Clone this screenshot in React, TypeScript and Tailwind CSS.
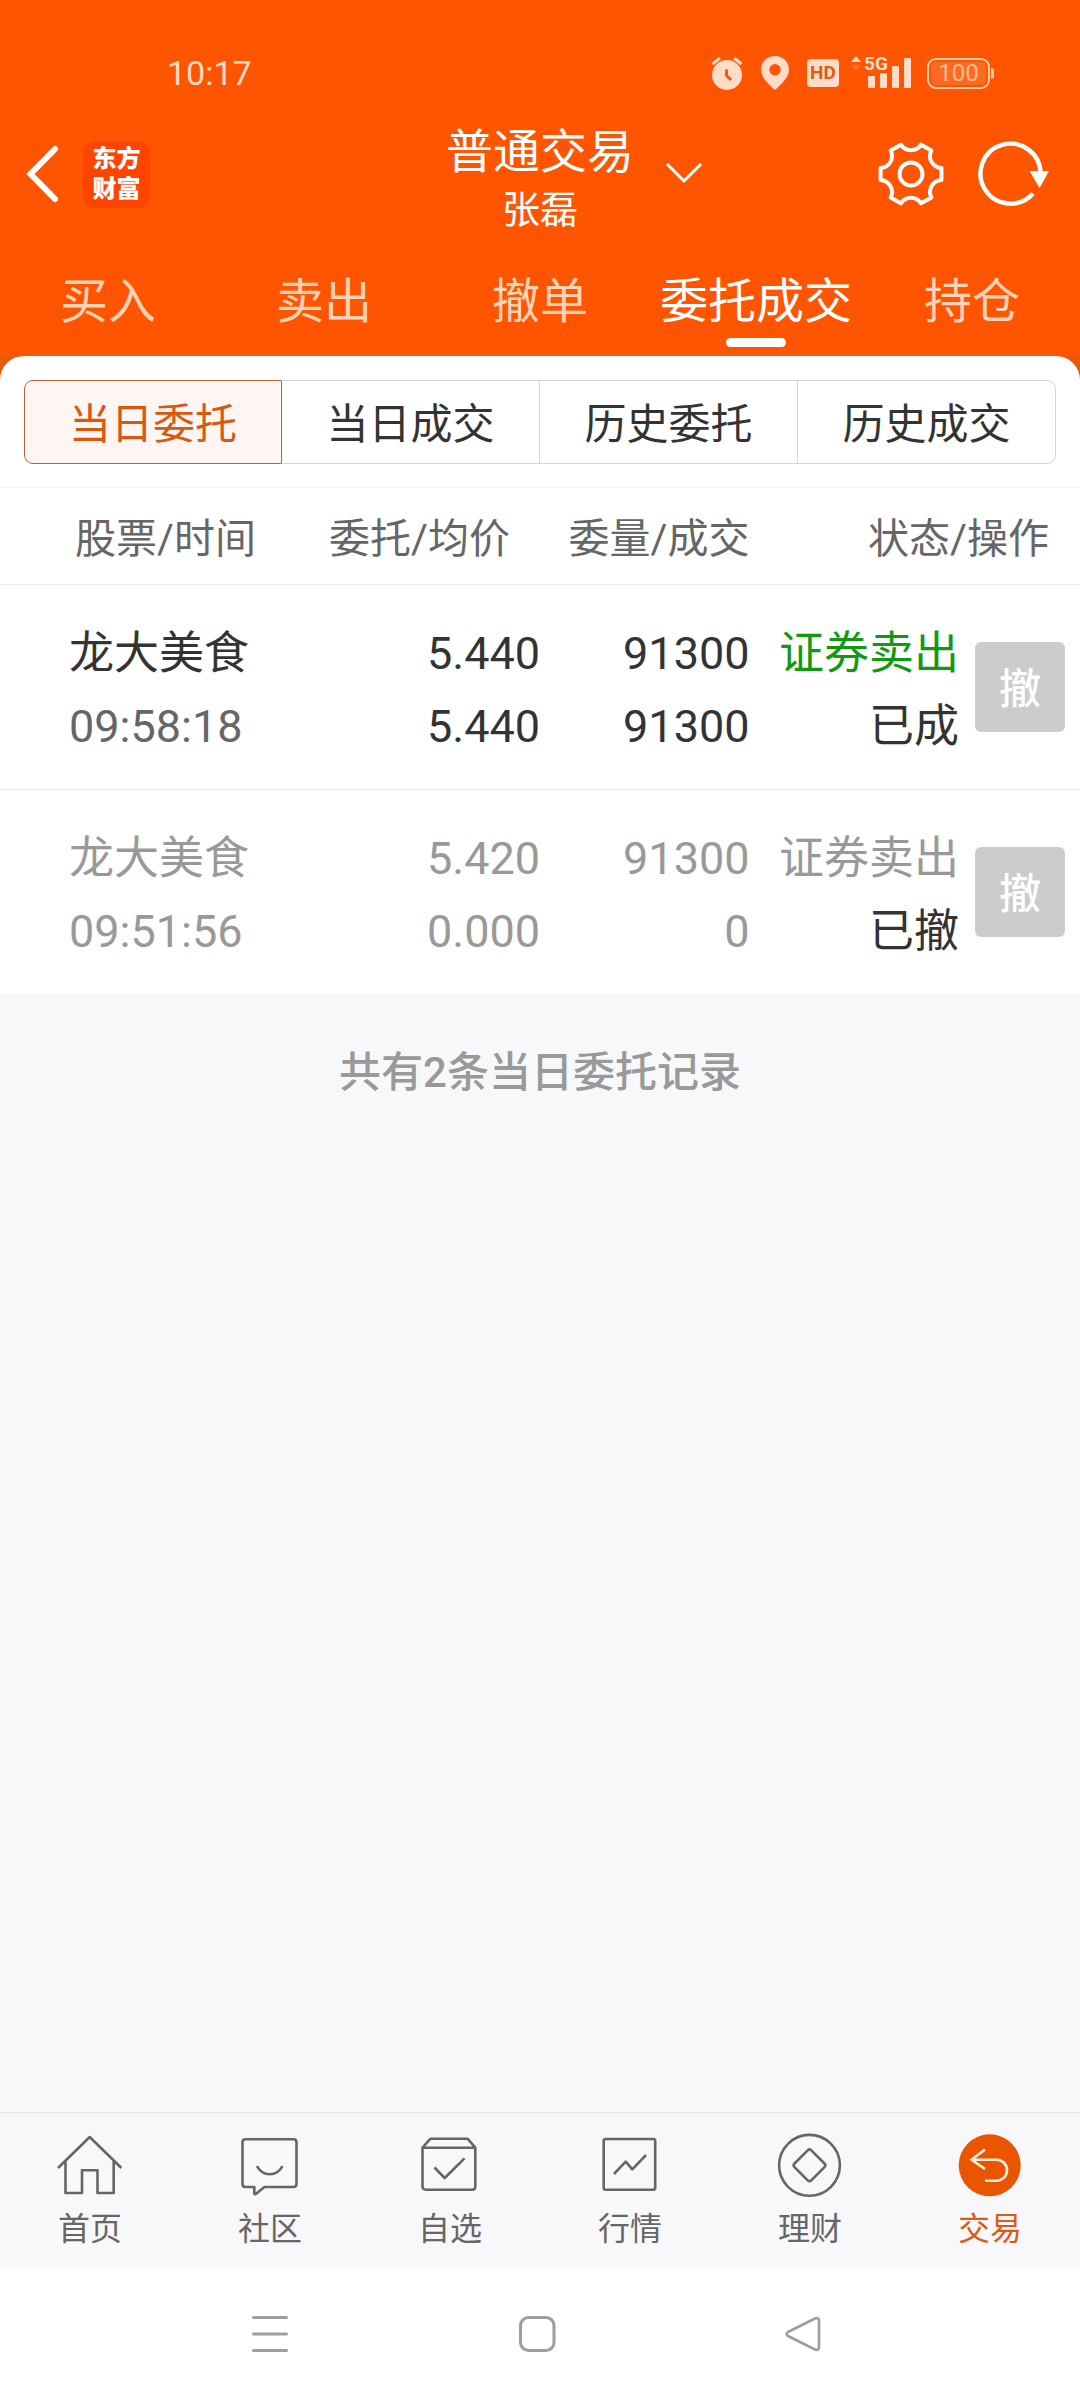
import type { ReactNode } from "react";

const mainTabs = ["买入", "卖出", "撤单", "委托成交", "持仓"];
const activeTab = "委托成交";

const subTabs = ["当日委托", "当日成交", "历史委托", "历史成交"];
const activeSubTab = "当日委托";

type Order = {
  name: string;
  time: string;
  price: string;
  average: string;
  amount: string;
  filled: string;
  side: string;
  status: string;
  cancelled: boolean;
};

const orders: Order[] = [
  {
    name: "龙大美食",
    time: "09:58:18",
    price: "5.440",
    average: "5.440",
    amount: "91300",
    filled: "91300",
    side: "证券卖出",
    status: "已成",
    cancelled: false,
  },
  {
    name: "龙大美食",
    time: "09:51:56",
    price: "5.420",
    average: "0.000",
    amount: "91300",
    filled: "0",
    side: "证券卖出",
    status: "已撤",
    cancelled: true,
  },
];

/* Outline of a six-toothed gear: flat teeth joined by concave arcs. */
function gearOutline(cx: number, cy: number, r: number) {
  const point = (deg: number) => {
    const a = (deg * Math.PI) / 180;
    return `${(cx + r * Math.cos(a)).toFixed(2)} ${(cy + r * Math.sin(a)).toFixed(2)}`;
  };
  let d = "";
  for (let i = 0; i < 6; i++) {
    const a = i * 60;
    d += i === 0 ? `M${point(a - 11)}` : "";
    d += `L${point(a + 11)}A12 12 0 0 0 ${point(a + 49)}`;
  }
  return d + "Z";
}

function StatusBar() {
  return (
    <div className="flex items-center justify-between pt-[53px] pr-[86px] pl-[167px] text-[#ffdcc8]">
      <time className="text-[34px] leading-10">10:17</time>
      <div className="flex items-center">
        <svg width="32" height="34" viewBox="0 0 32 34" aria-label="闹钟">
          <circle cx="16" cy="19" r="15" fill="currentColor" />
          <path d="M1.500 8L9 2M30.500 8L23 2" stroke="currentColor" strokeWidth="3" />
          <path d="M15.500 13.500V19.500L20 24" fill="none" stroke="#ff5500" strokeWidth="3" />
        </svg>
        <svg className="ml-[18px]" width="28" height="34" viewBox="0 0 28 34" aria-label="定位">
          <path
            fillRule="evenodd"
            fill="currentColor"
            d="M14 0C6 0 0 6 0 13.500C0 21 7 28 14 34C21 28 28 21 28 13.500C28 6 22 0 14 0ZM14 8A5.700 5.700 0 1 1 14 19.400A5.700 5.700 0 1 1 14 8Z"
          />
        </svg>
        <span className="ml-[18px] flex h-7 w-8 items-center justify-center rounded bg-[#ffdcc8] text-[19px] leading-7 font-bold text-[#e05a10]">
          HD
        </span>
        <div className="relative ml-3">
          <svg width="60" height="34" viewBox="0 0 60 34" aria-label="信号">
            <path d="M0 6L5 0L10 6Z" fill="currentColor" />
            <path d="M0 9L5 15L10 9Z" fill="#ff7433" />
            <g fill="currentColor">
              <rect x="17" y="20" width="7" height="12" rx="1" />
              <rect x="29" y="17" width="7" height="15" rx="1" />
              <rect x="41" y="10" width="7" height="22" rx="1" />
              <rect x="53" y="2" width="7" height="30" rx="1" />
            </g>
          </svg>
          <span className="absolute -top-1 left-[13px] text-[19px] leading-6 font-bold">5G</span>
        </div>
        <div className="ml-4 flex items-center gap-px">
          <span className="flex h-[31px] w-[63px] items-center justify-center rounded-[9px] border-2 border-[#ffcfae] p-[2px]">
            <span className="flex h-full w-full items-center justify-center rounded-[5px] bg-[#ff6a22] text-[24px] leading-6 text-[#ffbd96]">
              100
            </span>
          </span>
          <span className="h-[11px] w-[3px] rounded-r bg-[#ffcfae]" />
        </div>
      </div>
    </div>
  );
}

function TitleBar() {
  return (
    <div className="grid grid-cols-[1fr_auto_1fr] items-start pt-[26px] text-white">
      <div className="flex h-[110px] items-center pl-[22px]">
        <button type="button" aria-label="返回" className="px-1">
          <svg width="34" height="60" viewBox="0 0 34 60" fill="none" stroke="currentColor">
            <path d="M29 5L4.500 30L29 55" strokeWidth="6" strokeLinecap="round" />
          </svg>
        </button>
        <div className="ml-[19px] flex size-[67px] flex-col items-center justify-center rounded-[13px] bg-[#ff4400] text-[24px] leading-[30px] font-black">
          <span>东方</span>
          <span>财富</span>
        </div>
      </div>
      <div className="pt-[3px] text-center">
        <h1 className="text-[47px] leading-[60px]">普通交易</h1>
        <p className="text-[38px] leading-[57px]">张磊</p>
      </div>
      <div className="flex h-[110px] items-center pr-7 pl-[31px]">
        <button type="button" aria-label="切换账户">
          <svg width="38" height="22" viewBox="0 0 38 22" fill="none" stroke="currentColor">
            <path d="M2 1L19 18L36 1" strokeWidth="3" />
          </svg>
        </button>
        <button type="button" aria-label="设置" className="ml-auto">
          <svg width="68" height="68" viewBox="0 0 68 68" fill="none" stroke="currentColor">
            <path d={gearOutline(34, 34, 31)} strokeWidth="4" strokeLinejoin="round" />
            <circle cx="34" cy="34" r="11.500" strokeWidth="4" />
          </svg>
        </button>
        <button type="button" aria-label="刷新" className="ml-[33px]">
          <svg width="74" height="68" viewBox="0 0 74 68" fill="none" stroke="currentColor">
            <path d="M62.500 33A30 30 0 1 0 55 53.500" strokeWidth="4.500" />
            <path d="M51.500 31H71L61.500 48Z" fill="currentColor" stroke="none" />
          </svg>
        </button>
      </div>
    </div>
  );
}

function MainTabs() {
  return (
    <nav className="grid grid-cols-5 pt-[33px] pb-[9px]">
      {mainTabs.map((tab) => {
        const active = tab === activeTab;
        return (
          <button key={tab} type="button" className="flex flex-col items-center whitespace-nowrap">
            <span className={active ? "text-[48px] leading-[60px] text-white" : "text-[48px] leading-[60px] text-[#ffd3b8]"}>
              {tab}
            </span>
            <span className={active ? "mt-[6px] h-[9px] w-[60px] rounded-full bg-white" : "mt-[6px] h-[9px] w-[60px]"} />
          </button>
        );
      })}
    </nav>
  );
}

function SubTabs() {
  return (
    <div className="px-6 pt-6 pb-[23px]">
      <div className="grid grid-cols-4">
        {subTabs.map((tab) => (
          <button
            key={tab}
            type="button"
            className={
              tab === activeSubTab
                ? "h-[84px] rounded-l-[9px] border border-[#b0653c] bg-[#fff6f3] pt-[5px] text-[42px] leading-[60px] text-[#d9580f]"
                : "h-[84px] border border-l-0 border-[#d4d6d7] pt-[5px] text-[42px] leading-[60px] text-[#333333] last:rounded-r-[9px]"
            }
          >
            {tab}
          </button>
        ))}
      </div>
    </div>
  );
}

function OrderRow({ order }: { order: Order }) {
  const main = order.cancelled ? "text-[#999999]" : "text-[#333333]";
  const time = order.cancelled ? "text-[#999999]" : "text-[#666666]";
  const side = order.cancelled ? "text-[#999999]" : "text-[#109a10]";
  return (
    <tr className="border-t border-[#ebebeb] text-right text-[45px] leading-[73px] whitespace-nowrap">
      <td className="pt-8 pb-[26px] pl-[69px] text-left">
        <div className={main}>{order.name}</div>
        <div className={time}>{order.time}</div>
      </td>
      <td className={`pt-8 pb-[26px] ${main}`}>
        <div>{order.price}</div>
        <div>{order.average}</div>
      </td>
      <td className={`pt-8 pb-[26px] ${main}`}>
        <div>{order.amount}</div>
        <div>{order.filled}</div>
      </td>
      <td className="pt-8 pb-[26px]">
        <div className={side}>{order.side}</div>
        <div className="text-[#333333]">{order.status}</div>
      </td>
      <td className="pr-[15px]">
        <button
          type="button"
          disabled
          className="ml-auto flex size-[90px] items-center justify-center rounded-md bg-[#cccccc] pt-[5px] text-[42px] leading-[60px] font-medium text-white"
        >
          撤
        </button>
      </td>
    </tr>
  );
}

function OrderTable() {
  return (
    <table className="w-full table-fixed border-collapse">
      <colgroup>
        <col />
        <col className="w-[20%]" />
        <col className="w-[19.400%]" />
        <col className="w-[19.400%]" />
        <col className="w-[11.200%]" />
      </colgroup>
      <thead>
        <tr className="border-t border-[#f5f5f5] text-right text-[41px] leading-[60px] whitespace-nowrap text-[#666666]">
          <th className="pt-[21px] pb-[15px] pl-[75px] text-left font-normal">股票/时间</th>
          <th className="pt-[21px] pr-[30px] pb-[15px] font-normal">委托/均价</th>
          <th className="pt-[21px] pb-[15px] font-normal">委量/成交</th>
          <th colSpan={2} className="pt-[21px] pr-[31px] pb-[15px] font-normal">
            状态/操作
          </th>
        </tr>
      </thead>
      <tbody>
        {orders.map((order) => (
          <OrderRow key={order.time} order={order} />
        ))}
      </tbody>
    </table>
  );
}

function NavIcon({ children }: { children: ReactNode }) {
  return (
    <svg
      width="72"
      height="72"
      viewBox="0 0 72 72"
      fill="none"
      stroke="currentColor"
      strokeWidth="2.600"
      strokeLinejoin="round"
      aria-hidden="true"
    >
      {children}
    </svg>
  );
}

const navItems: { label: string; active?: boolean; icon: ReactNode }[] = [
  {
    label: "首页",
    icon: (
      <path d="M4 39L35.700 8L67.400 39M11.500 32V64H28V41.300H43.500V64H59.700V32" />
    ),
  },
  {
    label: "社区",
    icon: (
      <>
        <path d="M11.500 10.300H59.500Q62.500 10.300 62.500 13.300V55Q62.500 58 59.500 58H30.500L21.500 65.200Q20.300 65.500 20.300 64V58H11.500Q8.500 58 8.500 55V13.300Q8.500 10.300 11.500 10.300Z" />
        <path d="M23 37C28.500 48 43 48 48.500 37" />
      </>
    ),
  },
  {
    label: "自选",
    icon: (
      <>
        <path d="M8.500 18.700L16.500 9.700H53.500L61.300 18.700V57.500Q61.300 60.700 58 60.700H12Q8.500 60.700 8.500 57.500ZM8.500 18.700H61.300" />
        <path d="M20.500 38.500L30.700 49L50.500 29.300" />
      </>
    ),
  },
  {
    label: "行情",
    icon: (
      <>
        <rect x="9.700" y="10" width="51.500" height="50.700" rx="2" />
        <path d="M20 45L31.700 32.700L38.300 40.300L52 26" />
      </>
    ),
  },
  {
    label: "理财",
    icon: (
      <>
        <circle cx="35.500" cy="36.300" r="30.400" />
        <path d="M37.300 21.300L50.500 34.500Q52.300 36.300 50.500 38.100L37.300 51.300Q35.500 53.100 33.700 51.300L20.500 38.100Q18.700 36.300 20.500 34.500L33.700 21.300Q35.500 19.500 37.300 21.300Z" />
      </>
    ),
  },
  {
    label: "交易",
    active: true,
    icon: (
      <>
        <circle cx="35.700" cy="36.300" r="31" fill="#eb5500" stroke="none" />
        <path
          d="M31 20.500L17.500 30.700L31 40M17.500 30.700H42.500A10.500 10.500 0 0 1 42.500 51.700H31"
          stroke="#fff0e0"
          strokeLinejoin="miter"
        />
      </>
    ),
  },
];

function BottomNav() {
  return (
    <nav className="grid grid-cols-6 border-t border-[#e3e4e6] bg-[#f8f8fa] pt-4 pb-[19px]">
      {navItems.map((item) => (
        <a
          key={item.label}
          href="#"
          className={
            item.active
              ? "flex flex-col items-center gap-2 text-[#dc5a14]"
              : "flex flex-col items-center gap-2 text-[#666666]"
          }
        >
          <NavIcon>{item.icon}</NavIcon>
          <span className="text-[32px] leading-10">{item.label}</span>
        </a>
      ))}
    </nav>
  );
}

function SystemNav() {
  return (
    <div className="grid grid-cols-3 justify-items-center bg-white py-[46px] pr-[143px] pl-[136px] text-[#9e9e9e]">
      <button type="button" aria-label="最近任务">
        <svg width="40" height="40" viewBox="0 0 40 40" stroke="currentColor" strokeWidth="3" strokeLinecap="round">
          <path d="M3.500 3.500H36.500M3.500 20H36.500M3.500 36.500H36.500" />
        </svg>
      </button>
      <button type="button" aria-label="主屏幕">
        <svg width="40" height="40" viewBox="0 0 40 40" fill="none" stroke="currentColor" strokeWidth="3">
          <rect x="3.500" y="3.500" width="33.500" height="33" rx="8" />
        </svg>
      </button>
      <button type="button" aria-label="返回上一页">
        <svg width="40" height="40" viewBox="0 0 40 40" fill="none" stroke="currentColor" strokeWidth="2.600">
          <path d="M4 18Q1 20 4 22L31 35.500Q35 37 35 33V7Q35 3 31 4.500Z" />
        </svg>
      </button>
    </div>
  );
}

export default function App() {
  return (
    <div className="flex min-h-screen flex-col bg-[#f7f8fa] font-['Roboto','Noto_Sans_CJK_SC',sans-serif]">
      <header className="bg-[#ff5500]">
        <StatusBar />
        <TitleBar />
        <MainTabs />
      </header>
      <main className="flex-1">
        <div className="bg-linear-to-b from-[#e9590a] from-50% to-white to-50%">
          <section className="rounded-t-[24px] bg-white">
            <SubTabs />
            <OrderTable />
          </section>
        </div>
        <p className="pt-[49px] text-center text-[42px] leading-[60px] font-medium text-[#999999]">
          共有2条当日委托记录
        </p>
      </main>
      <BottomNav />
      <SystemNav />
    </div>
  );
}
